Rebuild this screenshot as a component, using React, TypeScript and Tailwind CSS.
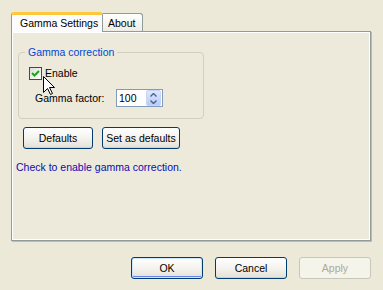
import React from 'react';

const btn =
  'h-[22px] rounded-[3px] border border-[#003C74] bg-gradient-to-b from-white via-[#F4F3EE] to-[#E3E0D6] text-black flex items-center justify-center';

function XpButton({ label, w, def, disabled }: { label: string; w: string; def?: boolean; disabled?: boolean }) {
  if (disabled) {
    return (
      <div className={`${w} h-[22px] rounded-[3px] border border-[#C9C7BA] bg-[#F5F4EA] text-[#ACA899] flex items-center justify-center`}>
        {label}
      </div>
    );
  }
  return (
    <div className={`${w} ${btn} ${def ? 'shadow-[inset_0_0_0_1px_#CEE7FF,inset_0_-1px_0_1px_#6982EE]' : 'shadow-[inset_0_-1px_0_#D6D0C5]'}`}>
      {label}
    </div>
  );
}

export default function App() {
  return (
    <div className="relative w-[383px] h-[290px] bg-[#ECE9D8] flex flex-col font-['Liberation_Sans',Arial,sans-serif] text-[10.5px] leading-[13px] text-black overflow-hidden">
      {/* tabs */}
      <div className="flex items-end pl-[11px] pt-[12px]">
        <div className="relative z-10 -mb-px w-[92px] h-[20px] rounded-t-[3px] border-x border-[#919B9C] border-t-[3px] border-t-[#FFC83C] bg-[#FCFCFE] pl-[8px] pt-[2px]">
          Gamma Settings
        </div>
        <div className="w-[40px] h-[18px] rounded-tr-[3px] border-t border-r border-[#919B9C] bg-gradient-to-b from-white to-[#EEEDE5] pl-[5px] pt-[3px]">
          About
        </div>
      </div>

      {/* panel */}
      <div className="ml-[11px] w-[360px] h-[210px] border border-[#919B9C] bg-[#EDEADB] shadow-[inset_1px_1px_0_#fff,inset_-1px_-1px_0_#fff,1px_1px_0_#BEBBAC] flex flex-col">
        <fieldset className="ml-[6px] mt-[14px] w-[186px] h-[73px] rounded-[4px] border border-[#D0D0BF] flex flex-col">
          <legend className="ml-[6px] px-[3px] text-[#0046D5]">Gamma correction</legend>
          <div className="flex items-center ml-[10px] mt-[8px]">
            <div className="w-[13px] h-[13px] border border-[#1C5180] bg-gradient-to-br from-[#DCDCD7] to-white flex items-center justify-center">
              <svg width="9" height="9" viewBox="0 0 9 9">
                <path d="M1 4 L3.5 6.5 L8 2" fill="none" stroke="#21A121" strokeWidth="2" />
              </svg>
            </div>
            <span className="ml-[3px]">Enable</span>
          </div>
          <div className="flex items-center ml-[16px] mt-[9px]">
            <span className="w-[81px]">Gamma factor:</span>
            <div className="w-[47px] h-[18px] border border-[#7F9DB9] bg-white flex items-center">
              <span className="ml-[2px] flex-1">100</span>
              <div className="w-[15px] h-[16px] mr-px rounded-[2px] bg-gradient-to-b from-[#DDE8FE] to-[#B6CBF9] border border-[#C7D4F7] flex flex-col items-center justify-center gap-[3px]">
                <svg width="7" height="4" viewBox="0 0 7 4">
                  <path d="M0.5 3.5 L3.5 0.5 L6.5 3.5" fill="none" stroke="#4D6185" strokeWidth="1.4" />
                </svg>
                <svg width="7" height="4" viewBox="0 0 7 4">
                  <path d="M0.5 0.5 L3.5 3.5 L6.5 0.5" fill="none" stroke="#4D6185" strokeWidth="1.4" />
                </svg>
              </div>
            </div>
          </div>
        </fieldset>

        <div className="flex ml-[11px] mt-[8px] gap-[9px]">
          <XpButton label="Defaults" w="w-[70px]" />
          <XpButton label="Set as defaults" w="w-[78px]" />
        </div>

        <div className="ml-[4px] mt-[12px] text-[#0A0AB4]">Check to enable gamma correction.</div>
      </div>

      {/* dialog buttons */}
      <div className="flex justify-end gap-[12px] pr-[12px] mt-[16px]">
        <XpButton label="OK" w="w-[72px]" def />
        <XpButton label="Cancel" w="w-[72px]" />
        <XpButton label="Apply" w="w-[72px]" disabled />
      </div>

      {/* mouse pointer */}
      <svg className="absolute left-[43px] top-[76px]" width="13" height="20" viewBox="0 0 13 20">
        <path d="M0.5 0.5 L0.5 16.5 L4.5 12.5 L7.5 18.5 L9.5 17.5 L6.5 11.5 L11.5 11.5 Z" fill="white" stroke="black" strokeWidth="1" />
      </svg>
    </div>
  );
}
